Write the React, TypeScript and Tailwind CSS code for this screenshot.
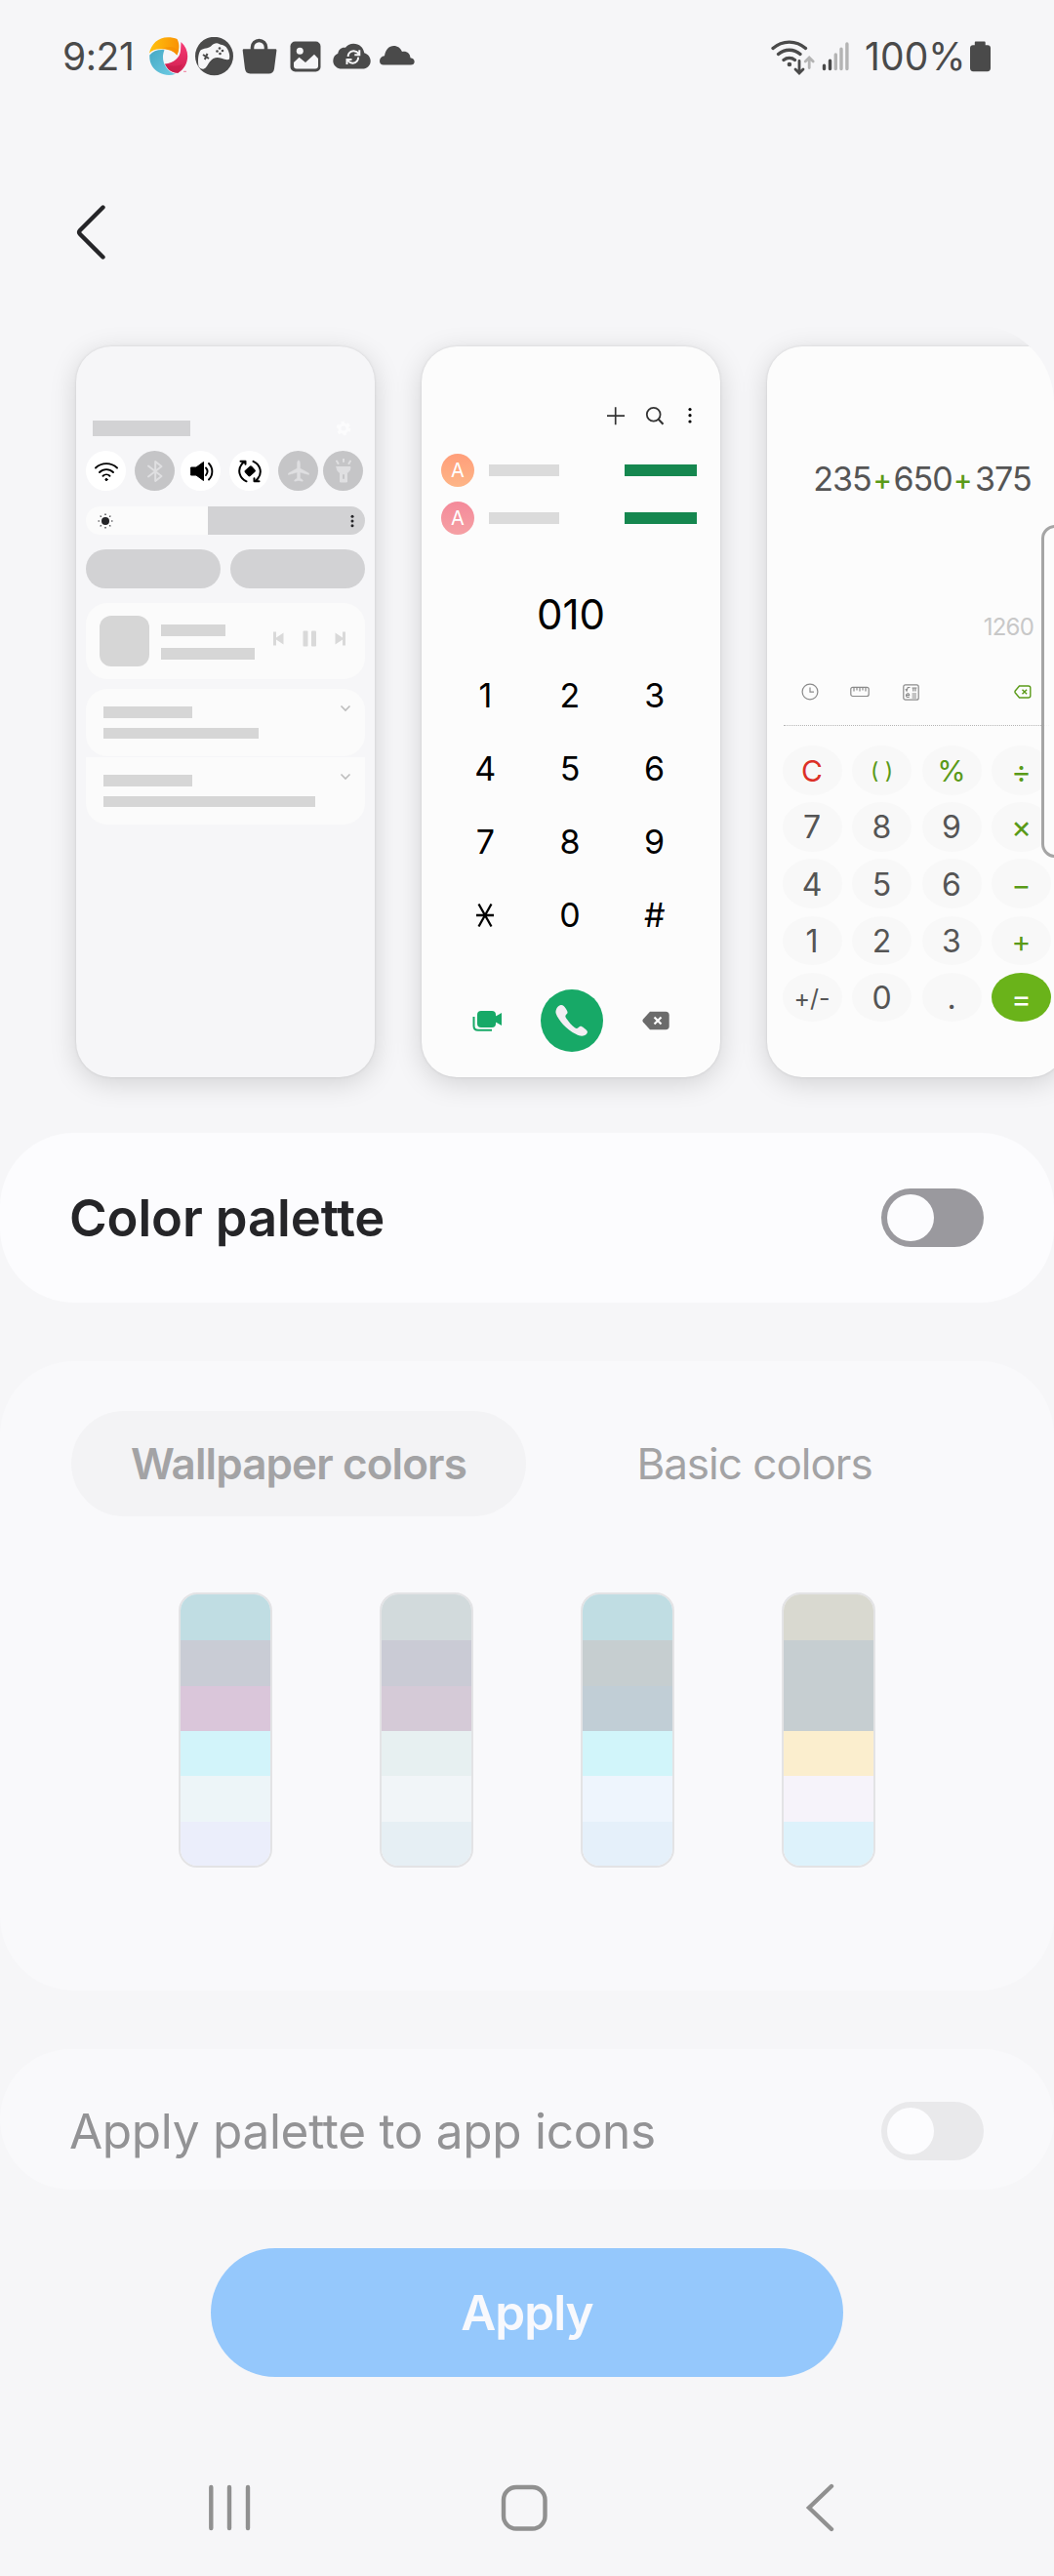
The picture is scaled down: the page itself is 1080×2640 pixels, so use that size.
import React from "react";

function StatusBar() {
  return (
    <header className="flex h-[115px] shrink-0 items-center pl-[64px] pr-[64px] text-[#4a4a4a]">
      <span className="w-[89px] text-[39px] leading-none tracking-[-0.4px]">9:21</span>
      <svg width="40" height="40" viewBox="0 0 40 40">
        <defs>
          <linearGradient id="pinYellow" x1="0" x2="1"><stop offset="0" stopColor="#ffc20e" /><stop offset="1" stopColor="#f99204" /></linearGradient>
          <linearGradient id="pinBlue" x1="0" y1="0" x2="1" y2="1"><stop offset="0" stopColor="#45a9c4" /><stop offset="1" stopColor="#6ecbe4" /></linearGradient>
          <linearGradient id="pinRed" x1="0" y1="0" x2="0" y2="1"><stop offset="0" stopColor="#f83b76" /><stop offset="1" stopColor="#cf1f4f" /></linearGradient>
        </defs>
        <path d="M0 16.500C2 7 9 .2 19 .2c3.500 0 7 .6 9.500 1.800C31.200 7 31 13 28.300 18.500 24.500 13.500 17.500 11.500 11 12.300 6.500 12.500 3 13.500 0 16.500z" fill="url(#pinYellow)" />
        <path d="M13 12.200C19 9 25 9 30 14l-1.700 4.500C24.500 13.500 19.500 12 13 12.200z" fill="#f58a00" opacity=".55" />
        <path d="M32.500 5C37 9 39.200 14 39.200 19.500c0 7.500-4 14-9.700 17.200C23.500 37 18.500 33.500 16 27.500 25 26.500 31.500 21 32 14z" fill="url(#pinRed)" />
        <path d="M16 27.500c5 3 12 2.500 18 .5l-4.500 8.700C23.500 37 18.500 33.500 16 27.500z" fill="#c81d4c" opacity=".7" />
        <path d="M.3 18.500C4 14 9.500 12.500 15.500 13.200 13 19 13.500 26 17.500 31.500 20 35 23.500 37 27 37.800 18 41 8 37.500 3 30 .8 26.500.1 22.500.3 18.500z" fill="url(#pinBlue)" />
        <path d="M35 35.300h3" stroke="#f07c9c" strokeWidth="1" />
      </svg>
      <svg className="ml-[7px]" width="40" height="40" viewBox="0 0 40 40">
        <ellipse cx="19.500" cy="19.500" rx="19.500" ry="19.700" fill="currentColor" />
        <path d="M3.500 30C2.500 24 3 17 5.500 13.500 9 11 13 12 16 9.500c3-3 6-4 8.500-2.500 2 1.200 4.500.8 7 3C34 13 36 18 35 22.500c-1.500 1.500-5 .3-8-.8-5-1.700-9-.5-12 3.500-2 2.500-3.500 6.500-6 7.300-2 .7-4.500-.5-5.500-2.500z" fill="#f6f6f8" />
        <path d="M8 18l6 4M12.500 17l-2.700 6" stroke="currentColor" strokeWidth="2" />
        <g fill="currentColor"><circle cx="25" cy="11.500" r="1.300" /><circle cx="28" cy="14" r="1.300" /><circle cx="22.500" cy="14.500" r="1.300" /><circle cx="25.500" cy="17" r="1.300" /></g>
      </svg>
      <svg className="ml-[6px]" width="40" height="40" viewBox="0 0 40 40">
        <path d="M12.500 14v-3.500a7 7 0 0 1 14 0V14" fill="none" stroke="currentColor" strokeWidth="3.600" />
        <path d="M4 12.300h32c1 0 1.500.6 1.400 1.400L35 32.500c-.5 3.400-2.500 5-5.500 5h-19c-3 0-5-1.600-5.500-5L2.700 13.700c-.1-.8.4-1.400 1.300-1.400z" fill="currentColor" />
      </svg>
      <svg className="ml-[7px]" width="40" height="40" viewBox="0 0 40 40">
        <rect x="4.500" y="4.500" width="31" height="31" rx="5" fill="currentColor" />
        <circle cx="14.300" cy="14.200" r="3.500" fill="#f6f6f8" />
        <path d="M8 29.500v-3.500l5.500-5.200 6.500 5.200 9-8.200L33 22v7.500c0 2-1 3-3 3H11c-2 0-3-1-3-3z" fill="#f6f6f8" />
      </svg>
      <svg className="ml-[8px]" width="40" height="40" viewBox="0 0 40 40">
        <path d="M9.500 32.500C4 32.500.3 28.800.3 24.200c0-3.500 2-6.200 5-7.400C5.800 13 8.500 10.300 13 10.800 15 8 18 6.700 21.200 6.700c6 0 10.300 4 11 9.500 3.800 1.200 6.500 4.300 6.500 8.200 0 4.500-3.500 8.100-8.500 8.100z" fill="currentColor" />
        <path d="M27 17.500c-3-4-8-4.200-10.300-1-.8 1.100-1.100 2.300-1 3.500M15 23.500c3 4 7.500 4 9.800 1.200 1-1.200 1.400-2.700 1.200-4M27.300 13.200v5h-5M14.500 28v-5h5" fill="none" stroke="#f6f6f8" strokeWidth="2" />
      </svg>
      <svg className="ml-[8px]" width="40" height="40" viewBox="0 0 40 40">
        <path d="M4 28.500c-2.500 0-4-1.500-4-4 0-2.800 2-5 5-5.200C6 13 9.500 9 14.500 9c4 0 7 2.200 8.500 6 5-.8 8.200 1.800 8.500 6.200 2.500.3 4.200 1.700 4.200 4 0 2-1.500 3.300-3.700 3.300z" fill="currentColor" />
      </svg>
      <span className="grow" />
      <svg width="47" height="40" viewBox="0 0 47 40">
        <g fill="none" stroke="currentColor" strokeWidth="3.300" strokeLinecap="round">
          <path d="M2 11.500a25 25 0 0 1 33.500 0M7.500 17.500a17 17 0 0 1 22.500 0M13 23.500a9 9 0 0 1 11.500 0" />
          <path d="M29 24.500v12M25 33l4 4 4-4" strokeWidth="2.800" />
          <path d="M39.200 31.500V21.500M35.200 25l4-4 4 4" stroke="#b4b4b4" strokeWidth="2.800" />
        </g>
        <circle cx="18.900" cy="28" r="2.300" fill="currentColor" />
      </svg>
      <svg className="ml-[5px]" width="30" height="40" viewBox="0 0 30 40" strokeWidth="3.400" strokeLinecap="round">
        <path d="M2.500 29.300v3.200M8.500 24.300v8.200" stroke="currentColor" />
        <path d="M14.300 18v14.500M20 12.200v20.300M25.900 7v25.500" stroke="#b4b4b4" />
      </svg>
      <span className="ml-[14px] w-[107px] text-[39px] leading-none tracking-[0.1px]">100%</span>
      <svg width="23" height="32" viewBox="0 0 23 32">
        <path d="M7 .5h8.500c.8 0 1.200.4 1.200 1.200v2.600h2.300c1.800 0 3 1.200 3 3v20.700c0 2-1.200 3.200-3.200 3.200H4.200C2.200 31.200 1 30 1 28V7.300c0-1.800 1.200-3 3-3h1.800V1.700C5.800.9 6.200.5 7 .5z" fill="currentColor" />
      </svg>
    </header>
  );
}

function QuickCircle({ on, className = "", children }: { on?: boolean; className?: string; children: React.ReactNode }) {
  return (
    <span className={`flex h-[41px] w-[41px] shrink-0 items-center justify-center rounded-full ${on ? "bg-white text-black" : "bg-[#c5c5c7] text-[#dfdfe1]"} ${className}`}>
      <svg width="26" height="26" viewBox="0 0 26 26" fill="none" stroke="currentColor" strokeLinecap="round" strokeLinejoin="round">
        {children}
      </svg>
    </span>
  );
}

const cardShell = "flex h-[749px] w-[306px] shrink-0 flex-col rounded-[36px] shadow-[0_0_3px_rgba(0,0,0,0.10),0_6px_28px_rgba(0,0,0,0.15)]";

function Notification({ wide, className }: { wide: string; className: string }) {
  return (
    <div className={`mx-[10px] flex h-[69px] shrink-0 justify-between bg-[#fbfbfb] pl-[18px] pr-[14px] ${className}`}>
      <div className="pt-[18px]">
        <div className="h-[12px] w-[91px] bg-[#d6d6d6]" />
        <div className={`mt-[10px] h-[11px] bg-[#d6d6d6] ${wide}`} />
      </div>
      <svg className="mt-[15px]" width="12" height="10" viewBox="0 0 12 10">
        <path d="M1.500 2.500L6 7l4.500-4.500" fill="none" stroke="#bdbdbd" strokeWidth="1.600" />
      </svg>
    </div>
  );
}

function QuickPanelPreview() {
  return (
    <section className={`${cardShell} bg-[#f6f6f8]`}>
      <div className="mt-[76px] flex h-[16px] items-center justify-between pl-[17px] pr-[24px]">
        <div className="h-[16px] w-[100px] bg-[#d2d2d4]" />
        <svg width="16" height="16" viewBox="0 0 16 16">
          <circle cx="8" cy="8" r="4" fill="none" stroke="#fcfcfd" strokeWidth="3" />
          <circle cx="8" cy="8" r="6.200" fill="none" stroke="#fcfcfd" strokeWidth="2.200" strokeDasharray="3.250 3.250" />
        </svg>
      </div>
      <div className="mt-[15px] flex pl-[10px]">
        <QuickCircle on>
          <path d="M2 9.500a16 16 0 0 1 22 0M6 14a10 10 0 0 1 14 0M9.500 17.800a5 5 0 0 1 7 0" strokeWidth="1.900" />
          <circle cx="13" cy="21.500" r="1.100" fill="currentColor" strokeWidth="1" />
        </QuickCircle>
        <QuickCircle className="ml-[9px]">
          <path d="M6 7.500l13.500 10.500-6.300 5V3l6.300 5L6 18.500" strokeWidth="2" />
        </QuickCircle>
        <QuickCircle on className="ml-[6px]">
          <path d="M3 9h5l7.500-5.500v19L8 17H3z" fill="currentColor" strokeWidth="1" />
          <path d="M18 9.500c2 2.200 2 5 0 7.500M21 5c4.500 4.500 4.500 12 0 16.500" strokeWidth="1.900" />
        </QuickCircle>
        <QuickCircle on className="ml-[9px]">
          <path d="M9.500 23.300C2.500 20 0 12 4.500 6L7 3M3.500 2.800h5v3M16.500 2.800c7 3.200 9.500 11 5 17.200L19 23M22.500 23.300h-5v-3" strokeWidth="2" />
          <rect x="9" y="9.500" width="8.500" height="7" rx="1" transform="rotate(-42 13 13)" fill="currentColor" strokeWidth="1" />
        </QuickCircle>
        <QuickCircle className="ml-[9px]">
          <path d="M13 2c1 0 1.400 1.200 1.400 2.800V10l9.100 5v1.500L14.400 14v6l2.800 2v1.300L13 22.500l-4.200.8V22l2.800-2v-6l-9.100 2.500V15l9.100-5V4.800C11.600 3.200 12 2 13 2z" fill="currentColor" strokeWidth=".5" />
        </QuickCircle>
        <QuickCircle className="ml-[5px]">
          <path d="M6 8.500h14c0 4-2 5-3.500 6.500V24h-7v-9C8 13.500 6 12.500 6 8.500z" fill="currentColor" strokeWidth="1" />
          <path d="M13 0v3M6 2.500l1.500 2.500M20 2.500l-1.500 2.500" strokeWidth="2" />
          <path d="M13 17v3" stroke="#c5c5c7" strokeWidth="2" />
        </QuickCircle>
      </div>
      <div className="mx-[10px] mt-[16px] flex h-[29px] overflow-hidden rounded-full">
        <div className="flex w-[125px] items-center bg-[#fbfbfb] pl-[12px]">
          <svg width="16" height="16" viewBox="0 0 16 16">
            <circle cx="8" cy="8" r="4" fill="#252528" />
            <path d="M8 .5V2M8 14v1.500M.5 8H2M14 8h1.500M2.700 2.700l1 1M12.300 12.300l1 1M13.300 2.700l-1 1M3.700 12.300l-1 1" stroke="#252528" strokeWidth="1.200" />
          </svg>
        </div>
        <div className="flex grow items-center justify-end bg-[#d2d2d4] pr-[11px]">
          <svg width="4" height="14" viewBox="0 0 4 14" fill="#252528"><circle cx="2" cy="2.200" r="1.500" /><circle cx="2" cy="7" r="1.500" /><circle cx="2" cy="11.800" r="1.500" /></svg>
        </div>
      </div>
      <div className="mx-[10px] mt-[15px] grid grid-cols-2 gap-[10px]">
        <div className="h-[40px] rounded-full bg-[#d2d2d4]" />
        <div className="h-[40px] rounded-full bg-[#d2d2d4]" />
      </div>
      <div className="mx-[10px] mt-[15px] flex h-[78px] shrink-0 rounded-[22px] bg-[#fbfbfb] pl-[14px]">
        <div className="mt-[13px] h-[52px] w-[51px] rounded-[12px] bg-[#d6d6d6]" />
        <div className="ml-[12px] w-[96px] pt-[22px]">
          <div className="h-[12px] w-[66px] bg-[#d6d6d6]" />
          <div className="mt-[12px] h-[12px] bg-[#d6d6d6]" />
        </div>
        <svg className="ml-[18px] mt-[28px]" width="76" height="17" viewBox="0 0 76 17" fill="#d9d9d9">
          <path d="M1 1.500h3v6L11.500 2.500v12L4 9.500v6H1zM64.500 2.500L72 7.500v-6h3v14h-3v-6l-7.500 5z" />
          <rect x="31.500" y=".5" width="5" height="16" rx="1" /><rect x="40" y=".5" width="5" height="16" rx="1" />
        </svg>
      </div>
      <Notification wide="w-[159px]" className="mt-[10px] rounded-[22px]" />
      <Notification wide="w-[217px]" className="mt-px rounded-b-[22px]" />
    </section>
  );
}

function Contact({ tint, className }: { tint: string; className: string }) {
  return (
    <div className={`flex h-[34px] shrink-0 items-center pl-[20px] ${className}`}>
      <span className={`flex h-[34px] w-[34px] items-center justify-center rounded-full text-[20px] leading-none text-white ${tint}`}>A</span>
      <span className="ml-[15px] h-[12px] w-[72px] bg-[#dbdbdb]" />
      <span className="ml-[67px] h-[12px] w-[74px] bg-[#15874f]" />
    </div>
  );
}

function DialerPreview() {
  return (
    <section className={`${cardShell} bg-[#fcfcfc]`}>
      <div className="mt-[61px] flex h-[20px] shrink-0 items-center pl-[189px] text-[#333]">
        <svg width="20" height="20" viewBox="0 0 20 20" stroke="currentColor" strokeWidth="1.700"><path d="M1 10.200h18M9.700 1.200v18" /></svg>
        <svg className="ml-[20px]" width="20" height="20" viewBox="0 0 20 20" fill="none" stroke="currentColor" strokeWidth="1.800"><circle cx="8.700" cy="8.700" r="6.900" /><path d="M13.500 13.500l5 5.200" strokeWidth="2.100" /></svg>
        <svg className="ml-[24px]" width="4" height="18" viewBox="0 0 4 18" fill="#000"><circle cx="2" cy="2.500" r="1.600" /><circle cx="2" cy="8.700" r="1.600" /><circle cx="2" cy="15" r="1.600" /></svg>
      </div>
      <Contact className="mt-[29px]" tint="bg-linear-to-b from-[#ff9e7a] to-[#fdb587]" />
      <Contact className="mt-[15px]" tint="bg-linear-to-b from-[#f48a9a] to-[#f5a0a4]" />
      <div className="mt-[52px] h-[60px] shrink-0 text-center text-[42px] leading-[60px] text-black">010</div>
      <div className="ml-[22px] mt-[15px] grid w-[260px] shrink-0 grid-cols-3 text-center text-[34px] leading-[75px] text-black">
        {["1", "2", "3", "4", "5", "6", "7", "8", "9"].map((d) => <span key={d}>{d}</span>)}
        <span className="flex items-center justify-center" aria-label="*">
          <svg width="20" height="26" viewBox="0 0 20 26" stroke="#000" strokeWidth="2.300"><path d="M1 13h18M3.500 1.500l13 23M16.500 1.500l-13 23" /></svg>
        </span>
        <span>0</span>
        <span>#</span>
      </div>
      <div className="mt-[39px] flex h-[64px] shrink-0 items-center pl-[52px]">
        <svg width="31" height="24" viewBox="0 0 31 24">
          <path d="M1.500 8v9.500c0 3 1.500 4.300 4.500 4.300h14" fill="none" stroke="#17a967" strokeWidth="2" />
          <rect x="5" y="2" width="19" height="17" rx="4" fill="#17a967" />
          <path d="M23 8l7-4v13l-7-4z" fill="#17a967" />
        </svg>
        <span className="ml-[39px] h-[64px] w-[64px] rounded-full bg-[#17a967]">
          <svg width="64" height="64" viewBox="0 0 64 64"><path d="M20.500 16c2-.5 3.700 1 5.500 4 2.200 3.600 2 4 0 6-1 1-.8 2.200.5 4 3 4.200 5 6.500 8.500 9.300 1.300 1 2.500 1 3.500 0 2-2 3-2 5.500 0 3.500 2.700 4.700 4 3.500 5.700-2 3-6.500 3.700-11 1C26 41 18 31 15.800 25c-1.200-3.500 1.200-8 4.700-9z" fill="#f3eef3" /></svg>
        </span>
        <svg className="ml-[40px]" width="28" height="20" viewBox="0 0 28 20">
          <path d="M8 .8h16c2.500 0 3.700 1.200 3.700 3.500v11.400c0 2.300-1.200 3.500-3.700 3.500H8L1 11.500c-.8-1-.8-2 0-3z" fill="#6b6b6b" />
          <path d="M12.500 6.500l7 7M19.500 6.500l-7 7" stroke="#fcfcfc" strokeWidth="2.200" />
        </svg>
      </div>
    </section>
  );
}

const calcKeys = [
  ["C", "text-[30px] text-[#dc3027]"], ["( )", "text-[23px] text-[#5a9a18]"], ["%", "text-[30px] text-[#5a9a18]"], ["÷", "text-[31px] text-[#5a9a18]"],
  ["7", ""], ["8", ""], ["9", ""], ["×", "text-[32px] text-[#5a9a18]"],
  ["4", ""], ["5", ""], ["6", ""], ["−", "text-[30px] text-[#5a9a18]"],
  ["1", ""], ["2", ""], ["3", ""], ["+", "text-[30px] text-[#5a9a18]"],
  ["+/-", "text-[25px] text-[#555]"], ["0", ""], [".", ""], ["=", "bg-[#6ab31a] text-[31px] text-white"],
];

function CalculatorPreview() {
  return (
    <section className={`${cardShell} bg-[#fcfcfc]`}>
      <div className="mt-[116px] flex h-[40px] shrink-0 items-center pl-[47px] text-center text-[34px] leading-none text-[#555]">
        <span className="w-[60px] tracking-[-1px]">235</span>
        <span className="w-[22.400px] text-[29px] font-medium text-[#5a9a18]">+</span>
        <span className="w-[60px] tracking-[-1px]">650</span>
        <span className="w-[22.400px] text-[29px] font-medium text-[#5a9a18]">+</span>
        <span className="w-[60px] tracking-[-1px]">375</span>
      </div>
      <div className="mt-[117px] h-[30px] shrink-0 pr-[33px] text-right text-[24px] leading-[30px] tracking-[-0.8px] text-[#c8c8c8]">1260</div>
      <div className="mt-[41px] flex h-[20px] shrink-0 items-center pl-[35px] text-[#8a8a8a]">
        <svg width="18" height="18" viewBox="0 0 18 18" fill="none" stroke="currentColor" strokeWidth="1.200"><circle cx="9" cy="9" r="7.900" /><path d="M9 4.500v4.700h4" /></svg>
        <svg className="ml-[32px]" width="20" height="12" viewBox="0 0 20 12" fill="none" stroke="currentColor" strokeWidth="1.200"><rect x=".8" y="1.300" width="18.400" height="9.200" rx="2" /><path d="M4 1.500v4M7 1.500v3M10 1.500v4M13 1.500v3M16 1.500v4" /></svg>
        <svg className="ml-[34px]" width="17" height="17" viewBox="0 0 17 17" fill="none" stroke="currentColor" strokeWidth="1.200"><rect x=".8" y=".8" width="15.400" height="15.400" rx="2" /><path d="M3 5l1 2 1.200-3.500h2.300M9.500 4h5M10.800 4v3.500M13 4v3.500M3.500 11.500h3.200c0-2.500-3.200-2.300-3.200.2 0 2.300 2.200 2 3.200 1.300M9.500 10h4.500M9.500 12h4.500M9.500 14h4.500" /></svg>
        <svg className="ml-[97px]" width="18" height="14" viewBox="0 0 18 14" fill="none" stroke="#5a9a18" strokeWidth="1.400"><path d="M5.500 1h9.300c1.400 0 2 .7 2 2v8c0 1.300-.6 2-2 2H5.500L1.300 8c-.5-.7-.5-1.300 0-2zM8.500 4.700l4.600 4.600M13.100 4.700L8.500 9.300" /></svg>
      </div>
      <div className="ml-[17px] mt-[24px] w-[272px] shrink-0 border-t border-dotted border-[#b5b5b5]" />
      <div className="ml-[15.500px] mt-[20px] grid w-[276px] shrink-0 grid-cols-[repeat(4,61px)] gap-x-[10.500px] gap-y-[7.700px]">
        {calcKeys.map(([k, c]) => (
          <span key={k} className={`flex h-[50.500px] items-center justify-center whitespace-nowrap rounded-[50%] pt-[2px] leading-none ${c.includes("bg-") ? c : `bg-[#f8f8f8] ${c || "text-[32px] text-[#555]"}`}`}>{k}</span>
        ))}
      </div>
    </section>
  );
}

function Toggle({ track }: { track: string }) {
  return (
    <span className={`flex h-[60px] w-[105px] shrink-0 items-center rounded-full pl-[6px] ${track}`}>
      <span className="h-[48px] w-[48px] rounded-full bg-[#fcfcfe]" />
    </span>
  );
}

const palettes = [
  ["bg-[#c0dde3]", "bg-[#c9ccd5]", "bg-[#dac6da]", "bg-[#d2f4fa]", "bg-[#edf5f8]", "bg-[#ebeefb]"],
  ["bg-[#d2dadc]", "bg-[#cacbd5]", "bg-[#d5cad7]", "bg-[#e7f0f1]", "bg-[#f1f5f8]", "bg-[#e6eff4]"],
  ["bg-[#c0dde3]", "bg-[#c6ced0]", "bg-[#c1ced6]", "bg-[#d1f5fa]", "bg-[#eef5fd]", "bg-[#e5f0fa]"],
  ["bg-[#d9d9d0]", "bg-[#c6ced1]", "bg-[#c6ced1]", "bg-[#fbeece]", "bg-[#f6f3fa]", "bg-[#ddf2fb]"],
];

export default function App() {
  return (
    <main className="relative flex h-[2640px] w-[1080px] flex-col overflow-hidden bg-[#f6f6f8] font-['Inter',sans-serif]">
      <StatusBar />
      <div className="flex h-[218px] shrink-0 pl-[77px] pt-[94px]">
        <svg width="32" height="58" viewBox="0 0 32 58"><path d="M28.500 3.500L5 27c-1.300 1.300-1.300 2.700 0 4l23.500 23.500" fill="none" stroke="#252528" strokeWidth="4.400" strokeLinecap="round" /></svg>
      </div>
      <div className="flex h-[828px] w-[1080px] shrink-0 gap-[48px] overflow-hidden rounded-tr-[80px] pl-[78px] pt-[22px]">
        <QuickPanelPreview />
        <DialerPreview />
        <CalculatorPreview />
      </div>
      <section className="flex h-[174px] shrink-0 items-center justify-between rounded-[76px] bg-[#fcfcfe] pl-[71px] pr-[72px]">
        <h1 className="text-[52.500px] font-semibold leading-none tracking-[-0.1px] text-[#252528]">Color palette</h1>
        <Toggle track="bg-[#9a999e]" />
      </section>
      <section className="mt-[60px] h-[645px] shrink-0 rounded-[76px] bg-[#f9f9fb] pt-[51px]">
        <div className="flex h-[108px] px-[73px] text-[44px] text-[#a3a3a5]">
          <span className="flex w-[466px] items-center justify-center rounded-full bg-[#f3f3f5] font-semibold tracking-[-0.9px]">Wallpaper colors</span>
          <span className="flex w-[468px] items-center justify-center tracking-[-1px]">Basic colors</span>
        </div>
        <div className="mt-[78px] flex gap-[110px] pl-[183px]">
          {palettes.map((bands, i) => (
            <div key={i} className="grid h-[282px] w-[96px] grid-rows-[47px_47px_46px_46px_47px_45px] overflow-hidden rounded-[19px] border-2 border-[#e3e3e5]">
              {bands.map((b, j) => <span key={j} className={b} />)}
            </div>
          ))}
        </div>
      </section>
      <section className="mt-[60px] h-[144px] shrink-0 overflow-hidden rounded-[74px] bg-[#f9f9fb]">
        <div className="flex h-[168px] items-center justify-between pl-[71px] pr-[72px]">
          <span className="pt-[2px] text-[49.500px] leading-none tracking-[-0.3px] text-[#939395]">Apply palette to app icons</span>
          <Toggle track="bg-[#e9e9eb]" />
        </div>
      </section>
      <button className="mt-[60px] flex h-[132px] w-[648px] shrink-0 items-center justify-center self-center rounded-full bg-[#95c8fc] pt-[2px] text-[49.500px] font-semibold leading-none tracking-[-1px] text-[#f8f9fd]">Apply</button>
      <nav className="flex h-[204px] shrink-0 pl-[212px] pt-[109px]">
        <svg width="48" height="50" viewBox="0 0 48 50"><path d="M4.300 4v42M23 4v42M42 4v42" stroke="#909090" strokeWidth="4.400" strokeLinecap="round" /></svg>
        <svg className="ml-[252px]" width="50" height="50" viewBox="0 0 50 50"><rect x="4" y="4" width="42.500" height="42.500" rx="13" fill="none" stroke="#909090" strokeWidth="4.400" /></svg>
        <svg className="ml-[262px]" width="34" height="50" viewBox="0 0 34 50"><path d="M28 3L5 25l23 22" fill="none" stroke="#909090" strokeWidth="4.400" strokeLinecap="round" /></svg>
      </nav>
      {/* Edge panel handle floating over the previews */}
      <div className="absolute left-[1067px] top-[538px] h-[341px] w-[30px] rounded-[14px] border-[3px] border-[#a5a5a5] bg-[#fcfcfc]/90" />
    </main>
  );
}
